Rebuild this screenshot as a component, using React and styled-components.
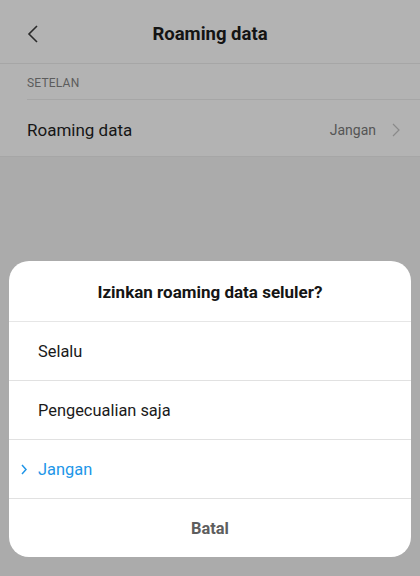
import React from "react";
import styled, { createGlobalStyle } from "styled-components";

const Global = createGlobalStyle`
  html, body {
    margin: 0;
    padding: 0;
    background: #ababab;
  }
  body {
    font-family: Roboto, "Noto Sans", "Liberation Sans", sans-serif;
  }
`;

const Screen = styled.div`
  width: 420px;
  height: 576px;
  display: flex;
  flex-direction: column;
  background: #ababab;
  overflow: hidden;
`;

const Page = styled.div`
  background: #b3b3b3;
`;

const Header = styled.div`
  height: 64px;
  display: flex;
  align-items: center;
  justify-content: center;
  position: relative;
  border-bottom: 1px solid #a6a6a6;
  box-sizing: border-box;
`;

const Back = styled.svg`
  position: absolute;
  left: 25px;
  top: 24px;
  width: 16px;
  height: 20px;
`;

const Title = styled.h1`
  margin: 0;
  font-size: 18.5px;
  font-weight: 700;
  color: #141414;
  margin-top: 4px;
`;

const Section = styled.div`
  margin-left: 27px;
  height: 36px;
  display: flex;
  align-items: center;
  border-bottom: 1px solid #a6a6a6;
  font-size: 12px;
  color: #5c5c5c;
  letter-spacing: 0.2px;
  padding-top: 3px;
  box-sizing: border-box;
`;

const SettingRow = styled.div`
  height: 57px;
  display: flex;
  align-items: center;
  padding: 3px 20px 0 27px;
  border-bottom: 1px solid #a6a6a6;
  box-sizing: border-box;
`;

const SettingLabel = styled.span`
  flex: 1;
  font-size: 17px;
  color: #161616;
`;

const SettingValue = styled.span`
  font-size: 14px;
  color: #555;
  margin-right: 16px;
`;

const Spacer = styled.div`
  flex: 1;
`;

const Sheet = styled.div`
  margin: 0 9px 19px;
  background: #fff;
  border-radius: 20px;
  overflow: hidden;
`;

const SheetTitle = styled.div`
  height: 61px;
  display: flex;
  align-items: center;
  justify-content: center;
  font-size: 17px;
  font-weight: 700;
  color: #151515;
  border-bottom: 1px solid #e6e6e6;
  box-sizing: border-box;
  padding-top: 1px;
`;

const Option = styled.div`
  height: 59px;
  display: flex;
  align-items: center;
  padding: 1px 0 0 29px;
  position: relative;
  font-size: 16.4px;
  color: ${(p) => (p.$active ? "#2196e8" : "#1a1a1a")};
  border-bottom: 1px solid #e1e1e1;
  box-sizing: border-box;
`;

const Check = styled.svg`
  position: absolute;
  left: 11px;
  top: 24px;
  width: 8px;
  height: 11px;
`;

const Cancel = styled.div`
  height: 58px;
  display: flex;
  align-items: center;
  justify-content: center;
  padding-top: 1px;
  box-sizing: border-box;
  font-size: 16.4px;
  font-weight: 700;
  color: #5e5e5e;
`;

const options = [
  { label: "Selalu" },
  { label: "Pengecualian saja" },
  { label: "Jangan", active: true },
];

export default function App() {
  return (
    <Screen>
      <Global />
      <Page>
        <Header>
          <Back viewBox="0 0 16 20">
            <path d="M12 2 L4 10 L12 18" fill="none" stroke="#2a2a2a" strokeWidth="1.6" />
          </Back>
          <Title>Roaming data</Title>
        </Header>
        <Section>SETELAN</Section>
        <SettingRow>
          <SettingLabel>Roaming data</SettingLabel>
          <SettingValue>Jangan</SettingValue>
          <svg width="8" height="14" viewBox="0 0 8 14">
            <path d="M1 1 L7 7 L1 13" fill="none" stroke="#8a8a8a" strokeWidth="1.2" />
          </svg>
        </SettingRow>
      </Page>
      <Spacer />
      <Sheet>
        <SheetTitle>Izinkan roaming data seluler?</SheetTitle>
        {options.map((o) => (
          <Option key={o.label} $active={o.active}>
            {o.active && (
              <Check viewBox="0 0 8 11">
                <path d="M2 1 L6 5.5 L2 10" fill="none" stroke="#2196e8" strokeWidth="1.5" />
              </Check>
            )}
            {o.label}
          </Option>
        ))}
        <Cancel>Batal</Cancel>
      </Sheet>
    </Screen>
  );
}
